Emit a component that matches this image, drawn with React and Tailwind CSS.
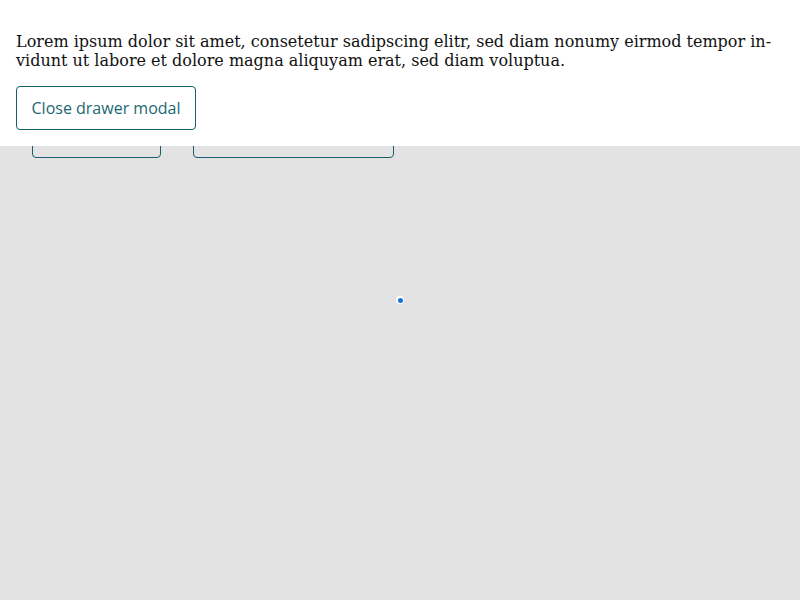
import React from 'react';

const App = () => {
  return (
    <div className="relative w-[800px] h-[600px] bg-[#e3e3e3] overflow-hidden" style={{ fontFamily: '"Open Sans", sans-serif' }}>
      {/* page behind the drawer */}
      <div className="flex gap-8 px-8 pt-[114px]">
        <button className="w-[129px] h-[44px] border border-[#175f6a] rounded-[4px] text-[#175f6a]">Open</button>
        <button className="w-[201px] h-[44px] border border-[#175f6a] rounded-[4px] text-[#175f6a]">Open drawer</button>
      </div>

      {/* drawer */}
      <div className="absolute top-0 left-0 right-0 bg-white px-4 pt-8 pb-4">
        <p className="text-[16px] leading-[19px] text-[#111]" style={{ fontFamily: '"DejaVu Serif", serif' }}>
          Lorem ipsum dolor sit amet, consetetur sadipscing elitr, sed diam nonumy eirmod tempor in&shy;vidunt ut labore et dolore magna aliquyam erat, sed diam voluptua.
        </p>
        <button className="mt-4 h-[44px] w-[180px] border border-[#175f6a] rounded-[4px] text-[16px] text-[#1c6872] bg-white">
          Close drawer modal
        </button>
      </div>

      {/* focus dot */}
      <div className="absolute left-[396px] top-[296px] w-[8px] h-[8px] rounded-full bg-white flex items-center justify-center">
        <div className="w-[5px] h-[5px] bg-[#1a6fe0] rounded-full" />
      </div>
    </div>
  );
};

export default App;
